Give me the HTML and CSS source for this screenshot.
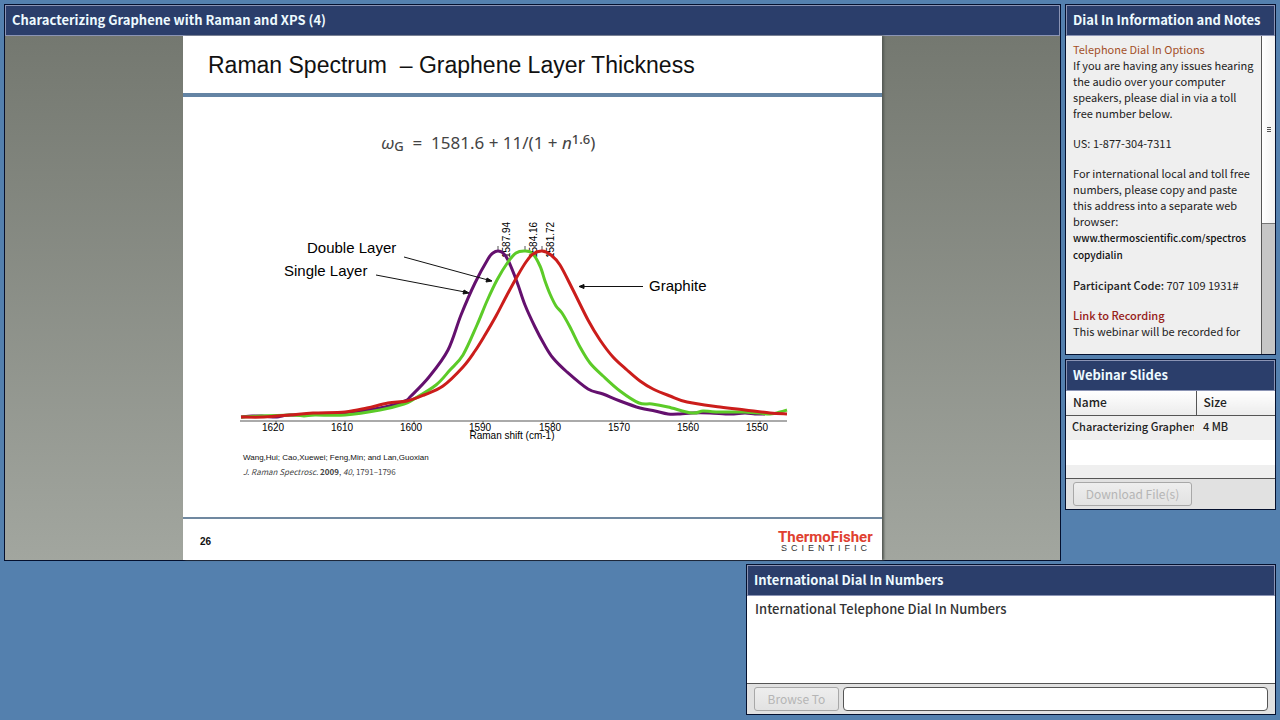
FILE: index.html
```html
<!doctype html>
<html lang="en">
<head>
    <meta charset="utf-8">
    <title>Characterizing Graphene with Raman and XPS</title>
    <link rel="stylesheet" href="styles.css">
</head>
<body>

<div class="stage">
    <main class="panel share">
        <h2 class="panel-title">Characterizing Graphene with Raman and XPS (4)</h2>
        <div class="share-body">
            <div class="slide">
                <h1 class="slide-title">Raman Spectrum &nbsp;– Graphene Layer Thickness</h1>
                <div class="slide-body">
                    <p class="formula"><i>ω</i><sub>G</sub> &nbsp;= &nbsp;1581.6 + 11/(1 + <i>n</i><sup>1.6</sup>)</p>

                    <svg class="chart" viewBox="183 210 699 232">
                        <g class="peaks">
                            <text transform="translate(510 258) rotate(-90)">1587.94</text>
                            <text transform="translate(537 258) rotate(-90)">1584.16</text>
                            <text transform="translate(554 258) rotate(-90)">1581.72</text>
                        </g>
                        <path class="axis" d="M240 421H787"/>
                        <path class="ticks" d="M276 421v3M345 421v3M414 421v3M483 421v3M553 421v3M622 421v3M691 421v3M760 421v3M498 246v5M525 246v5M542 246v5"/>
                        <g id="curves"></g>
                        <g class="ticks-text">
                            <text x="273" y="431">1620</text>
                            <text x="342" y="431">1610</text>
                            <text x="411" y="431">1600</text>
                            <text x="480" y="431">1590</text>
                            <text x="550" y="431">1580</text>
                            <text x="619" y="431">1570</text>
                            <text x="688" y="431">1560</text>
                            <text x="757" y="431">1550</text>
                            <text x="512" y="439">Raman shift (cm-1)</text>
                        </g>
                        <g class="labels">
                            <text x="307" y="253">Double Layer</text>
                            <text x="284" y="276">Single Layer</text>
                            <text x="649" y="291">Graphite</text>
                        </g>
                        <g class="arrows">
                            <path d="M404 257L488 280M376 275L465 292M643 286.500H583"/>
                            <path class="head" d="M492 281L486 282L487 278zM469 293L463 294L464 290zM579 286.500L584 284.500V288.500z"/>
                        </g>
                    </svg>

                    <div class="citation">
                        <p>Wang,Hui; Cao,Xuewei; Feng,Min; and Lan,Guoxian</p>
                        <p class="journal"><i>J. Raman Spectrosc.</i> <b>2009</b>, <i>40</i>, 1791–1796</p>
                    </div>
                </div>
                <footer class="slide-footer">
                    <span class="slide-number">26</span>
                    <div class="logo">
                        <span class="logo-name">ThermoFisher</span>
                        <span class="logo-sub">SCIENTIFIC</span>
                    </div>
                </footer>
            </div>
        </div>
    </main>

    <aside class="side">
        <section class="panel notes">
            <h2 class="panel-title">Dial In Information and Notes</h2>
            <div class="notes-body">
                <div class="notes-text">
                    <p><span class="orange">Telephone Dial In Options</span><br>
                    If you are having any issues hearing<br>the audio over your computer<br>speakers, please dial in via a toll<br>free number below.</p>
                    <p>US: 1-877-304-7311</p>
                    <p>For international local and toll free<br>numbers, please copy and paste<br>this address into a separate web<br>browser:<br>
                    <a href="#">www.thermoscientific.com/spectros<br>copydialin</a></p>
                    <p><b>Participant Code:</b> 707 109 1931#</p>
                    <p><b class="red">Link to Recording</b><br>This webinar will be recorded for</p>
                </div>
                <div class="scrollbar"><div class="thumb"></div></div>
            </div>
        </section>

        <section class="panel files">
            <h2 class="panel-title">Webinar Slides</h2>
            <div class="files-list">
                <table>
                    <thead>
                        <tr><th class="col-name">Name</th><th>Size</th></tr>
                    </thead>
                    <tbody>
                        <tr><td><div class="clip">Characterizing Graphene</div></td><td>4 MB</td></tr>
                    </tbody>
                </table>
            </div>
            <div class="panel-footer">
                <button type="button" class="download" disabled>Download File(s)</button>
            </div>
        </section>
    </aside>
</div>

<section class="panel numbers">
    <h2 class="panel-title">International Dial In Numbers</h2>
    <div class="numbers-list">International Telephone Dial In Numbers</div>
    <div class="panel-footer">
        <button type="button" class="browse" disabled>Browse To</button>
        <input type="text" class="url" aria-label="Browse To">
    </div>
</section>

<script>
    const curves = [
        {
            color: '#64106e',
            points: [[241, 417], [252, 416], [262, 416], [277, 417], [290, 415], [345, 413], [385, 407], [405, 401], [411, 396], [429, 377], [448, 350], [461, 315], [475, 283], [488, 259], [493, 253], [498, 251], [503, 253], [508, 260], [517, 282], [525, 305], [535, 327], [544, 344], [553, 358], [567, 372], [588, 389], [603, 394], [620, 401], [640, 408], [655, 411], [668, 414], [680, 414], [692, 413], [710, 413], [730, 414], [745, 413], [755, 414], [765, 414]]
        },
        {
            color: '#5ccb28',
            points: [[241, 417], [290, 415], [304, 416], [315, 415], [345, 415], [380, 410], [404, 404], [414, 399], [436, 385], [450, 370], [463, 355], [477, 325], [487, 301], [497, 280], [508, 262], [516, 253], [524, 251], [532, 253], [540, 266], [545, 281], [550, 294], [556, 306], [562, 313], [570, 327], [580, 347], [590, 363], [603, 376], [620, 391], [639, 403], [652, 404], [668, 407], [692, 413], [703, 411], [716, 412], [745, 412], [770, 414], [780, 412], [787, 410]]
        },
        {
            color: '#cb1d1b',
            points: [[241, 417], [264, 417], [290, 415], [313, 413], [345, 412], [367, 408], [388, 403], [407, 401], [424, 395], [443, 386], [463, 367], [475, 351], [485, 335], [496, 316], [507, 295], [518, 275], [526, 262], [533, 254], [542, 251], [551, 255], [560, 265], [573, 290], [588, 320], [600, 340], [613, 357], [627, 370], [640, 381], [653, 389], [670, 396], [687, 402], [720, 407], [745, 410], [770, 413], [787, 414]]
        }
    ]

    // smooth line through all points
    function toPath(p) {
        let d = 'M' + p[0]
        for (let i = 0; i < p.length - 1; i++) {
            const a = p[i - 1] || p[i]
            const b = p[i]
            const c = p[i + 1]
            const e = p[i + 2] || c
            d += 'C' + [
                b[0] + (c[0] - a[0]) / 6, b[1] + (c[1] - a[1]) / 6,
                c[0] - (e[0] - b[0]) / 6, c[1] - (e[1] - b[1]) / 6,
                c[0], c[1]
            ]
        }
        return d
    }

    const curvesEl = document.getElementById('curves')
    curves.forEach(function (curve) {
        const path = document.createElementNS('http://www.w3.org/2000/svg', 'path')
        path.setAttribute('d', toPath(curve.points))
        path.setAttribute('stroke', curve.color)
        curvesEl.appendChild(path)
    })
</script>
</body>
</html>
```
FILE: styles.css
```css
* {
    box-sizing: border-box;
}

body {
    display: flex;
    flex-direction: column;
    gap: 3px;
    min-height: 100vh;
    margin: 0;
    padding: 4px 4px 5px;
    background: #5480ae;
    font-family: "Noto Sans CJK SC", sans-serif;
    font-size: 12px;
    color: #222;
}

h1, h2, p {
    margin: 0;
}

.stage {
    display: flex;
    flex: 1;
    gap: 4px;
}

.panel {
    display: flex;
    flex-direction: column;
    border: 1px solid #04102e;
    background: #fff;
}

.panel-title {
    height: 31px;
    padding: 0 6px;
    border: 1px solid #8b94b4;
    background: #2b3e6b;
    color: #eefaff;
    font-size: 13px;
    line-height: 27px;
    white-space: nowrap;
}

.share {
    flex: 1;
}

.share-body {
    display: flex;
    flex: 1;
    justify-content: center;
    background: linear-gradient(#747870, #a2a69f);
}

.slide {
    display: flex;
    flex-direction: column;
    width: 699px;
    background: #fff;
    box-shadow: 2px 0 2px #555a55;
    font-family: "Liberation Sans", sans-serif;
    color: #111;
}

.slide-title {
    height: 61px;
    padding-left: 25px;
    border-bottom: 4px solid #6484a4;
    font-size: 23px;
    font-weight: 400;
    line-height: 58px;
}

.slide-body {
    flex: 1;
}

.formula {
    margin: 32px 0 53px;
    padding-left: 198px;
    font-family: "Noto Sans", sans-serif;
    font-size: 17px;
    line-height: 28px;
    color: #444;
}

.formula sub,
.formula sup {
    font-size: 13px;
    font-weight: 500;
    line-height: 0;
}

.formula sub {
    vertical-align: -2px;
}

.formula sup {
    vertical-align: 5px;
}

.chart {
    display: block;
    width: 100%;
}

.axis {
    stroke: #aaa;
    stroke-width: 2;
}

.ticks {
    stroke: #555;
}

#curves {
    fill: none;
    stroke-width: 3;
    stroke-linejoin: round;
}

.peaks,
.ticks-text {
    font-size: 10px;
}

.ticks-text {
    text-anchor: middle;
}

.labels {
    font-size: 15px;
}

.arrows {
    stroke: #111;
}

.head {
    fill: #111;
}

.citation {
    padding: 9px 0 0 60px;
    font-size: 8px;
    line-height: 14px;
}

.journal {
    font-family: "Noto Sans CJK SC", sans-serif;
    color: #444;
}

.slide-footer {
    display: flex;
    align-items: center;
    justify-content: space-between;
    height: 43px;
    padding: 4px 9px 0 17px;
    border-top: 2px solid #7088a0;
}

.slide-number {
    font-size: 10px;
    font-weight: 700;
}

.logo {
    display: flex;
    flex-direction: column;
    width: 95px;
}

.logo-name {
    color: #e0402f;
    font-family: Roboto, sans-serif;
    font-size: 15px;
    font-weight: 700;
    line-height: 14px;
}

.logo-sub {
    padding-left: 3px;
    color: #333;
    font-size: 9px;
    line-height: 9px;
    letter-spacing: 4px;
}

.side {
    display: flex;
    flex-direction: column;
    gap: 4px;
    width: 211px;
}

.notes {
    height: 351px;
}

.notes-body {
    display: flex;
    flex: 1;
    min-height: 0;
    background: #efefef;
}

.notes-text {
    flex: 1;
    padding: 5px 0 0 7px;
    font-size: 11px;
    line-height: 16px;
    white-space: nowrap;
}

.notes-text p {
    margin-bottom: 14px;
}

.notes-text a {
    color: #111;
    font-size: 10px;
    font-weight: 500;
    text-decoration: none;
}

.notes-text b {
    font-weight: 500;
}

.orange {
    color: #a34f28;
}

.notes-text .red {
    color: #962018;
}

.scrollbar {
    flex: none;
    width: 14px;
    border-left: 1px solid #555;
    background: #c6c6c6;
}

.thumb {
    display: flex;
    align-items: center;
    justify-content: center;
    height: 188px;
    border-bottom: 1px solid #777;
    background: linear-gradient(90deg, #fff, #f0f0f0);
}

.thumb::before {
    content: "";
    width: 4px;
    height: 5px;
    background: repeating-linear-gradient(#555 0 1px, transparent 1px 2px);
}

.files {
    height: 151px;
}

.files-list {
    flex: 1;
    background: linear-gradient(#efefef 0 49px, #fff 49px 74px, #efefef 74px);
}

table {
    width: 100%;
    border-collapse: collapse;
    table-layout: fixed;
}

th,
td {
    height: 24px;
    padding: 0 0 2px 7px;
    font-weight: 500;
    line-height: 20px;
    text-align: left;
}

th {
    border-bottom: 1px solid #555;
    background: linear-gradient(#fff, #ececec);
}

td {
    padding-left: 6px;
    font-size: 11px;
}

th + th,
td + td {
    padding-left: 7px;
}

.col-name {
    width: 130px;
    border-right: 1px solid #555;
}

.clip {
    width: 122px;
    overflow: hidden;
    white-space: nowrap;
}

.panel-footer {
    display: flex;
    align-items: center;
    gap: 4px;
    height: 31px;
    padding: 0 7px;
    border-top: 1px solid #555;
    background: #e1e1e1;
}

button {
    height: 24px;
    padding: 0 0 2px;
    border: 1px solid #a8a8a8;
    border-radius: 3px;
    background: linear-gradient(#eee, #e2e2e2);
    color: #b5b5b5;
    font: inherit;
}

.download {
    width: 119px;
}

.browse {
    width: 85px;
}

.url {
    flex: 1;
    height: 24px;
    border: 1px solid #555;
    border-radius: 4px;
    background: #fff;
    font: inherit;
}

.numbers {
    align-self: flex-end;
    width: 530px;
    height: 151px;
}

.numbers-list {
    flex: 1;
    padding: 4px 8px;
    color: #333;
    font-size: 13px;
    font-weight: 500;
    line-height: 18px;
}
```
